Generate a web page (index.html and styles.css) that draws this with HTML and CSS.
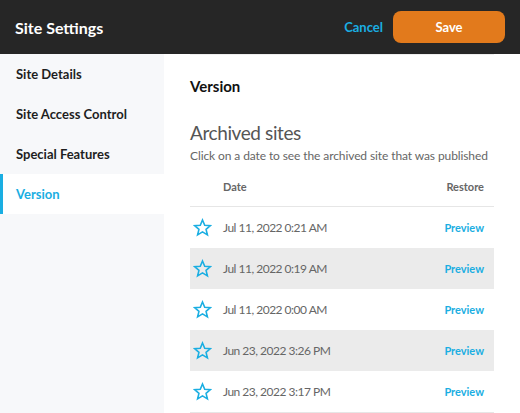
FILE: index.html
```html
<!DOCTYPE html>
<html>
<head>
    <title>Site Settings</title>
    <meta name="viewport" content="width=device-width, initial-scale=1">
    <link rel="stylesheet" href="styles.css">
</head>
<body>

<!-- Top bar -->
<div class="topbar">
    <div class="topbar-title">Site Settings</div>
    <div class="topbar-actions">
        <a class="cancel-link">Cancel</a>
        <button type="button" class="save-btn">Save</button>
    </div>
</div>

<div class="layout">
    <!-- Sidebar -->
    <ul class="side-nav">
        <li>Site Details</li>
        <li>Site Access Control</li>
        <li>Special Features</li>
        <li class="active">Version</li>
    </ul>

    <!-- Main content -->
    <div class="main">
        <div class="main-inner">
            <h2 class="section-title">Version</h2>
            <h3 class="archive-title">Archived sites</h3>
            <p class="archive-sub">Click on a date to see the archived site that was published</p>

            <div class="archive-table">
                <div class="archive-head">
                    <span class="col-icon"></span>
                    <span class="col-date">Date</span>
                    <span class="col-action">Restore</span>
                </div>
                <div class="archive-row">
                    <span class="col-icon"><svg class="star" viewBox="0 0 24 24"><path d="M12 2.5l2.8 6.6 7.2.6-5.5 4.7 1.7 7-6.2-3.8-6.2 3.8 1.7-7L2 9.7l7.2-.6z"/></svg></span>
                    <span class="col-date">Jul 11, 2022 0:21 AM</span>
                    <span class="col-action"><a>Preview</a></span>
                </div>
                <div class="archive-row">
                    <span class="col-icon"><svg class="star" viewBox="0 0 24 24"><path d="M12 2.5l2.8 6.6 7.2.6-5.5 4.7 1.7 7-6.2-3.8-6.2 3.8 1.7-7L2 9.7l7.2-.6z"/></svg></span>
                    <span class="col-date">Jul 11, 2022 0:19 AM</span>
                    <span class="col-action"><a>Preview</a></span>
                </div>
                <div class="archive-row">
                    <span class="col-icon"><svg class="star" viewBox="0 0 24 24"><path d="M12 2.5l2.8 6.6 7.2.6-5.5 4.7 1.7 7-6.2-3.8-6.2 3.8 1.7-7L2 9.7l7.2-.6z"/></svg></span>
                    <span class="col-date">Jul 11, 2022 0:00 AM</span>
                    <span class="col-action"><a>Preview</a></span>
                </div>
                <div class="archive-row">
                    <span class="col-icon"><svg class="star" viewBox="0 0 24 24"><path d="M12 2.5l2.8 6.6 7.2.6-5.5 4.7 1.7 7-6.2-3.8-6.2 3.8 1.7-7L2 9.7l7.2-.6z"/></svg></span>
                    <span class="col-date">Jun 23, 2022 3:26 PM</span>
                    <span class="col-action"><a>Preview</a></span>
                </div>
                <div class="archive-row">
                    <span class="col-icon"><svg class="star" viewBox="0 0 24 24"><path d="M12 2.5l2.8 6.6 7.2.6-5.5 4.7 1.7 7-6.2-3.8-6.2 3.8 1.7-7L2 9.7l7.2-.6z"/></svg></span>
                    <span class="col-date">Jun 23, 2022 3:17 PM</span>
                    <span class="col-action"><a>Preview</a></span>
                </div>
            </div>
        </div>
    </div>
</div>

</body>
</html>
```

FILE: styles.css
```css
/* Global Reset */
* {
    margin: 0;
    padding: 0;
    box-sizing: border-box;
    font-family: Lato, "Open Sans", sans-serif;
}

body {
    background: #ffffff;
    color: #222;
    height: 100vh;
    display: flex;
    flex-direction: column;
    overflow: hidden;
}

/* Top Bar */
.topbar {
    height: 54px;
    flex-shrink: 0;
    background: #262626;
    display: flex;
    align-items: center;
    justify-content: space-between;
    padding: 0 15px;
}

.topbar-title {
    color: #ffffff;
    font-size: 16px;
    font-weight: 700;
}

.topbar-actions {
    display: flex;
    align-items: center;
    gap: 10px;
}

.cancel-link {
    color: #1aaee2;
    font-size: 13px;
    font-weight: 700;
    cursor: pointer;
}

.save-btn {
    width: 112px;
    height: 32px;
    background: #e27a1c;
    color: #ffffff;
    border: none;
    border-radius: 8px;
    font-size: 13px;
    font-weight: 700;
    cursor: pointer;
}

/* Layout */
.layout {
    flex: 1;
    display: flex;
}

/* Sidebar */
.side-nav {
    width: 164px;
    flex-shrink: 0;
    background: #f7f8fa;
    list-style: none;
}

.side-nav li {
    height: 40px;
    display: flex;
    align-items: center;
    padding-left: 16px;
    font-size: 13px;
    font-weight: 700;
    color: #1e1e1e;
    cursor: pointer;
}

.side-nav li.active {
    background: #ffffff;
    color: #1aaee2;
    border-left: 3px solid #1aaee2;
    padding-left: 13px;
}

/* Main */
.main {
    flex: 1;
    padding: 0 26px;
}

.main-inner {
    border-top: 1px solid #eeeeee;
}

.section-title {
    margin-top: 21px;
    font-size: 15px;
    line-height: 20px;
    font-weight: 700;
    color: #111;
}

.archive-title {
    margin-top: 25px;
    font-size: 19px;
    line-height: 24px;
    font-weight: 400;
    letter-spacing: -0.4px;
    color: #555;
}

.archive-sub {
    margin-top: 3px;
    font-size: 12px;
    line-height: 16px;
    letter-spacing: -0.1px;
    color: #666;
}

/* Archive table */
.archive-table {
    margin-top: 2px;
    border-bottom: 1px solid #e6e6e6;
}

.archive-head,
.archive-row {
    display: flex;
    align-items: center;
}

.archive-head {
    height: 41px;
    border-bottom: 1px solid #e6e6e6;
    font-size: 11px;
    font-weight: 700;
    color: #666;
}

.archive-row {
    height: 41px;
    font-size: 12px;
    letter-spacing: -0.5px;
    color: #666;
}

.archive-row:nth-child(odd) {
    background: #ebebeb;
}

.col-icon {
    width: 33px;
    padding-left: 3px;
    display: flex;
    align-items: center;
}

.col-date {
    flex: 1;
}

.col-action {
    width: 52px;
    padding-right: 10px;
    text-align: right;
    letter-spacing: 0;
}

.col-action a {
    color: #1aaee2;
    font-size: 11px;
    font-weight: 700;
    cursor: pointer;
}

.star {
    width: 19px;
    height: 19px;
    fill: none;
    stroke: #1aaee2;
    stroke-width: 2;
    stroke-linejoin: miter;
}
```
